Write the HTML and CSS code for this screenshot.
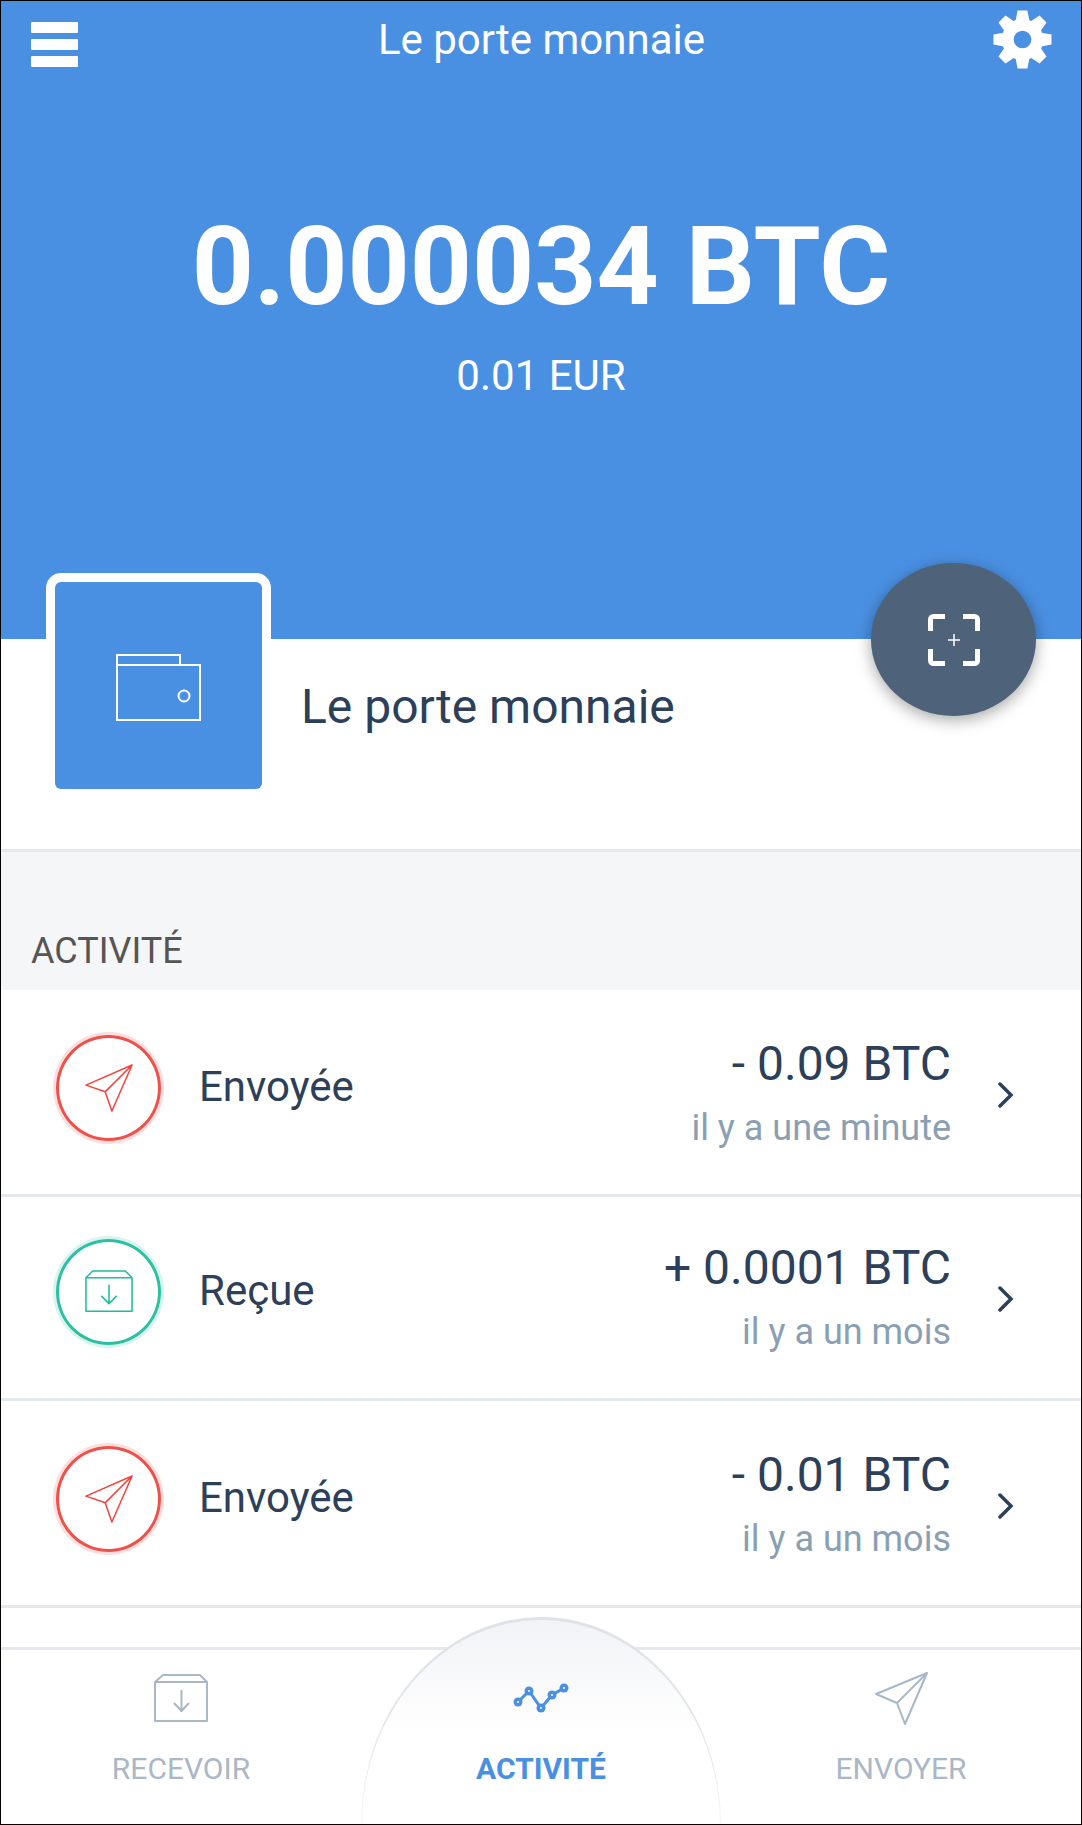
FILE: index.html
```html
<!DOCTYPE html>
<html lang="fr">

<head>
  <meta charset="UTF-8">
  <title>Le porte monnaie</title>
  <link rel="stylesheet" href="styles.css">
</head>

<body>
  <div class="app">

    <header class="top">
      <div class="top-bar">
        <div class="burger"><span></span><span></span><span></span></div>
        <div class="top-title">Le porte monnaie</div>
        <svg class="gear" viewBox="0 0 60 60">
          <g fill="#fff">
            <path d="M25 .5h10l2.500 13v33l-2.500 13H25l-2.500-13v-33z"/>
            <path d="M25 .5h10l2.500 13v33l-2.500 13H25l-2.500-13v-33z" transform="rotate(45 30 30)"/>
            <path d="M25 .5h10l2.500 13v33l-2.500 13H25l-2.500-13v-33z" transform="rotate(90 30 30)"/>
            <path d="M25 .5h10l2.500 13v33l-2.500 13H25l-2.500-13v-33z" transform="rotate(135 30 30)"/>
            <circle cx="30" cy="30" r="21"/>
          </g>
          <circle cx="30" cy="30" r="9" fill="#4a90e2"/>
        </svg>
      </div>
      <div class="balance">0.000034 BTC</div>
      <div class="balance-fiat">0.01 EUR</div>
    </header>

    <section class="wallet">
      <div class="wallet-frame">
        <div class="wallet-tile">
          <svg class="wallet-icon" viewBox="0 0 85 67" fill="none" stroke="#fff" stroke-width="2">
            <path d="M1 12V1h63v11"/>
            <rect x="1" y="11" width="83" height="55"/>
            <circle cx="68" cy="42" r="5.500"/>
          </svg>
        </div>
      </div>
      <div class="wallet-name">Le porte monnaie</div>
      <div class="scan-btn">
        <svg viewBox="0 0 52 52" width="52" height="52" fill="none" stroke="#fff">
          <path stroke-width="5" d="M17 2.500H5.500a3 3 0 0 0-3 3V17M35 2.500h11.500a3 3 0 0 1 3 3V17M17 49.500H5.500a3 3 0 0 1-3-3V35M35 49.500h11.500a3 3 0 0 0 3-3V35"/>
          <path stroke-width="1.500" d="M26 20v12M20 26h12"/>
        </svg>
      </div>
    </section>

    <div class="section-label">ACTIVITÉ</div>

    <ul class="tx-list">
      <li class="tx">
        <div class="tx-badge sent">
          <svg viewBox="0 0 50 50" fill="none" stroke="#f0453f" stroke-width="1.600" stroke-linejoin="round">
            <path d="M49 1 1 22l20 7zM49 1 21 29l7 20z"/>
          </svg>
        </div>
        <div class="tx-name">Envoyée</div>
        <div class="tx-right">
          <div class="tx-amount">- 0.09 BTC</div>
          <div class="tx-time">il y a une minute</div>
        </div>
        <svg class="chevron" viewBox="0 0 16 26"><path d="M2 2l11 11L2 24" /></svg>
      </li>
      <li class="tx">
        <div class="tx-badge received">
          <svg viewBox="0 0 50 44" fill="none" stroke="#1fbc9c" stroke-width="1.600" stroke-linejoin="round">
            <path d="M1 8h48v35H1zM1 8l7-7h34l7 7"/>
            <path d="M25 15v20M17 27l8 8 8-8"/>
          </svg>
        </div>
        <div class="tx-name">Reçue</div>
        <div class="tx-right">
          <div class="tx-amount">+ 0.0001 BTC</div>
          <div class="tx-time">il y a un mois</div>
        </div>
        <svg class="chevron" viewBox="0 0 16 26"><path d="M2 2l11 11L2 24" /></svg>
      </li>
      <li class="tx">
        <div class="tx-badge sent">
          <svg viewBox="0 0 50 50" fill="none" stroke="#f0453f" stroke-width="1.600" stroke-linejoin="round">
            <path d="M49 1 1 22l20 7zM49 1 21 29l7 20z"/>
          </svg>
        </div>
        <div class="tx-name">Envoyée</div>
        <div class="tx-right">
          <div class="tx-amount">- 0.01 BTC</div>
          <div class="tx-time">il y a un mois</div>
        </div>
        <svg class="chevron" viewBox="0 0 16 26"><path d="M2 2l11 11L2 24" /></svg>
      </li>
    </ul>

    <nav class="tabs">
      <div class="tabs-arc"></div>
      <div class="tab">
        <div class="tab-icon">
          <svg width="54" height="48" viewBox="0 0 54 48" fill="none" stroke="#a9b7c6" stroke-width="2" stroke-linejoin="round">
            <path d="M1 8h52v39H1zM1 8l8-7h37l7 7"/>
            <path d="M27.500 16v22M20 29l7.500 8 7.500-8"/>
          </svg>
        </div>
        <span>RECEVOIR</span>
      </div>
      <div class="tab active">
        <div class="tab-icon">
          <svg width="56" height="30" viewBox="0 0 56 30" fill="none" stroke="#4a90e2" stroke-width="3">
            <path d="M5 19 16 8l12 17 11-13 12-7"/>
            <g fill="#4a90e2" stroke="none">
              <circle cx="5" cy="19" r="4.500"/>
              <circle cx="16" cy="8" r="4.500"/>
              <circle cx="28" cy="25" r="4.500"/>
              <circle cx="39" cy="12" r="4.500"/>
              <circle cx="51" cy="5" r="4.500"/>
            </g>
            <g fill="#fff" stroke="none">
              <circle cx="5" cy="19" r="1"/>
              <circle cx="16" cy="8" r="1"/>
              <circle cx="28" cy="25" r="1"/>
              <circle cx="39" cy="12" r="1"/>
              <circle cx="51" cy="5" r="1"/>
            </g>
          </svg>
        </div>
        <span>ACTIVITÉ</span>
      </div>
      <div class="tab">
        <div class="tab-icon">
          <svg width="53" height="53" viewBox="0 0 53 53" fill="none" stroke="#a9b7c6" stroke-width="2" stroke-linejoin="round">
            <path d="M52 1 1 22l21 9zM52 1 22 31l8 21z"/>
          </svg>
        </div>
        <span>ENVOYER</span>
      </div>
    </nav>

  </div>
</body>

</html>
```

FILE: styles.css
```css
* {
  box-sizing: border-box;
}

body {
  margin: 0;
  font-family: Roboto, sans-serif;
  color: #2c4059;
}

.app {
  position: relative;
  width: 1082px;
  height: 1825px;
  border: 1px solid #000;
  overflow: hidden;
  background-color: #fff;
}

/* blue header */
.top {
  height: 638px;
  background-color: #4a90e2;
  color: #fff;
  text-align: center;
}

.top-bar {
  display: flex;
  align-items: flex-start;
  height: 170px;
  padding: 9px 29px 0 30px;
}

.burger {
  display: flex;
  flex-direction: column;
  gap: 6px;
  width: 59px;
  margin-top: 12px;
}

.burger span {
  display: block;
  width: 47px;
  height: 11px;
  background-color: #fff;
  border-radius: 1px;
}

.top-title {
  flex: 1;
  font-size: 42px;
  line-height: 60px;
}

.gear {
  width: 59px;
  height: 59px;
}

.balance {
  margin-top: 36px;
  font-size: 108.500px;
  font-weight: 700;
  line-height: 120px;
}

.balance-fiat {
  margin-top: 24px;
  font-size: 42px;
  line-height: 50px;
}

/* wallet row */
.wallet {
  position: relative;
  display: flex;
  align-items: flex-start;
  height: 213px;
  padding-left: 45px;
  border-bottom: 3px solid #e8e9eb;
}

.wallet-frame {
  width: 225px;
  height: 225px;
  margin-top: -66px;
  padding: 9px;
  background-color: #fff;
  border-radius: 15px;
}

.wallet-tile {
  display: flex;
  align-items: center;
  justify-content: center;
  height: 100%;
  background-color: #4a90e2;
  border-radius: 6px;
}

.wallet-icon {
  width: 85px;
  height: 67px;
  margin-top: 4px;
}

.wallet-name {
  margin-left: 30px;
  margin-top: 38px;
  font-size: 48px;
  line-height: 60px;
}

.scan-btn {
  position: absolute;
  left: 870px;
  top: -76px;
  display: flex;
  align-items: center;
  justify-content: center;
  width: 165px;
  height: 153px;
  border-radius: 50%;
  background-color: #4e6279;
  box-shadow: 0 4px 16px rgba(0, 0, 0, 0.35);
}

/* list */
.section-label {
  height: 138px;
  padding: 77px 0 0 30px;
  background-color: #f5f6f8;
  color: #555;
  font-size: 36px;
  line-height: 44px;
}

.tx-list {
  list-style: none;
  margin: 0;
  padding: 0;
}

.tx {
  display: flex;
  align-items: center;
  height: 207px;
  padding: 0 67px 0 56px;
  border-bottom: 3px solid #e5e8ed;
}

.tx:nth-child(2) {
  height: 204px;
  padding-bottom: 3px;
}

.tx-badge {
  display: flex;
  align-items: center;
  justify-content: center;
  width: 105px;
  height: 106px;
  margin-top: -9px;
  margin-left: -1px;
  border-radius: 50%;
  border: 3px solid;
}

.tx-badge svg {
  width: 48px;
}

.sent {
  border-color: #f0504a;
  box-shadow: 0 0 0 3px #fbdedd;
}

.received {
  border-color: #2cc0a2;
  box-shadow: 0 0 0 3px #d9f3ee;
}

.tx-name {
  flex: 1;
  margin-left: 38px;
  margin-top: -12px;
  font-size: 42px;
}

.tx-right {
  text-align: right;
}

.tx-amount {
  font-size: 48px;
  line-height: 60px;
}

.tx-time {
  margin-top: 11px;
  color: #8a9fb2;
  font-size: 36px;
  line-height: 46px;
}

.chevron {
  width: 16px;
  height: 26px;
  margin-left: 47px;
  margin-top: 6px;
  fill: none;
  stroke: #2c4059;
  stroke-width: 3.500;
  stroke-linecap: round;
}

/* bottom tabs */
.tabs {
  position: absolute;
  left: 0;
  right: 0;
  bottom: 0;
  display: flex;
  height: 177px;
  background-color: #fff;
  border-top: 3px solid #e5e8ed;
}

.tabs-arc {
  position: absolute;
  left: 360px;
  top: -33px;
  width: 360px;
  height: 207px;
  border: 1px solid transparent;
  border-top-width: 3px;
  border-bottom: 0;
  border-radius: 50% 50% 0 0 / 100% 100% 0 0;
  background:
    linear-gradient(#f2f3f6, #fff 55%) padding-box,
    linear-gradient(#dfe2e8 45%, #f6f6f7) border-box;
}

.tab {
  position: relative;
  flex: 1;
  display: flex;
  flex-direction: column;
  align-items: center;
  padding-top: 18px;
  color: #a9b7c6;
  font-size: 30px;
  line-height: 36px;
}

.tab-icon {
  display: flex;
  align-items: center;
  justify-content: center;
  height: 60px;
  margin-bottom: 23px;
}

.active {
  color: #4a90e2;
  font-weight: 700;
}
```
